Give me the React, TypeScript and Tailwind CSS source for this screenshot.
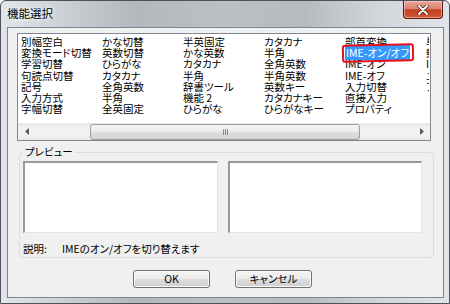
import React from 'react';

const columns: string[][] = [
  ['別幅空白', '変換モード切替', '学習切替', '句読点切替', '記号', '入力方式', '字幅切替'],
  ['かな切替', '英数切替', 'ひらがな', 'カタカナ', '全角英数', '半角', '全英固定'],
  ['半英固定', 'かな英数', 'カタカナ', '半角', '辞書ツール', '機能 2', 'ひらがな'],
  ['カタカナ', '半角', '全角英数', '半角英数', '英数キー', 'カタカナキー', 'ひらがなキー'],
  ['部首変換', 'IME-オン/オフ', 'IME-オン', 'IME-オフ', '入力切替', '直接入力', 'プロパティ'],
  ['単語登録', '郵便番号', 'IMEパッド', 'ユーザー辞書', 'ファンクション', '', ''],
];

const SELECTED = 'IME-オン/オフ';

function Arrow({ dir }: { dir: 'left' | 'right' }) {
  return (
    <svg width="4" height="7" viewBox="0 0 4 7">
      {dir === 'left' ? (
        <path d="M4 0L0 3.5L4 7Z" fill="#5a5a5a" />
      ) : (
        <path d="M0 0L4 3.5L0 7Z" fill="#5a5a5a" />
      )}
    </svg>
  );
}

function WinButton({ label }: { label: string }) {
  return (
    <button className="w-[77px] h-[18px] rounded-[3px] border border-[#707070] bg-[linear-gradient(180deg,#f4f4f4_0%,#ebebeb_48%,#dddddd_52%,#cfcfcf_100%)] text-[10.5px] leading-[16px] text-black shadow-[inset_0_0_0_1px_#fbfbfb]">
      {label}
    </button>
  );
}

export default function App() {
  return (
    <div className="w-[450px] h-[304px] bg-white overflow-hidden font-['Noto_Sans_CJK_JP',sans-serif] [font-feature-settings:'palt'] text-black">
      <div className="w-[450px] h-[304px] flex flex-col rounded-t-[6px] border border-[#4b5259] bg-[linear-gradient(90deg,#e2e6ea_0%,#cfd3d7_12%,#b4b8bc_30%,#bdc0c3_50%,#b8bbbe_68%,#d3d7db_85%,#e0e4e8_100%)]">
        {/* title bar */}
        <div className="h-[26px] flex items-start shrink-0">
          <div className="pl-[6px] pt-[5px] text-[11.5px] leading-[14px] [text-shadow:0_0_5px_#ffffff,0_0_3px_#ffffff]">
            機能選択
          </div>
          <button className="ml-auto mr-[6px] w-[40px] h-[18px] flex items-center justify-center rounded-b-[4px] border border-t-0 border-[#5a1a10] bg-[linear-gradient(180deg,#e8a797_0%,#d98370_45%,#c2401f_52%,#cf5a3a_100%)] shadow-[inset_0_0_0_1px_rgba(255,220,210,0.5)]">
            <svg width="12" height="10" viewBox="0 0 12 10">
              <path d="M2 1L10 9M10 1L2 9" stroke="#4a1a12" strokeWidth="3.4" strokeLinecap="round" />
              <path d="M2 1L10 9M10 1L2 9" stroke="#ffffff" strokeWidth="2" strokeLinecap="round" />
            </svg>
          </button>
        </div>

        {/* client area */}
        <div className="flex-1 ml-[6px] mr-[5px] mb-[5px] border border-[#7d858d] bg-[#f0f0f0] flex flex-col">
          {/* list view */}
          <div className="ml-[9px] mt-[5px] w-[414px] h-[108px] border border-[#828790] bg-white flex flex-col overflow-hidden">
            <div className="h-[89px] w-[412px] flex overflow-hidden pl-[3px] pt-[2px] text-[10.5px] leading-[11.2px]">
              {columns.map((col, ci) => (
                <div key={ci} className={`${ci === 5 ? 'w-[3px] overflow-hidden' : 'w-[81px]'} shrink-0 flex flex-col`}>
                  {col.map((item, ri) => (
                    <div key={ri} className="h-[11.2px] whitespace-nowrap">
                      {item === SELECTED ? (
                        <span className="relative inline-block">
                          <span className="bg-[#3399ff] text-white px-[1px]">{item}</span>
                          <span className="absolute -left-[3px] -right-[4px] -top-[3px] -bottom-[4px] border-2 border-[#e8101e] rounded-[3px] rotate-[-1.5deg]" />
                        </span>
                      ) : (
                        item
                      )}
                    </div>
                  ))}
                </div>
              ))}
            </div>
            {/* horizontal scrollbar */}
            <div className="h-[17px] flex bg-[linear-gradient(180deg,#e6e6e6_0%,#f2f2f2_30%,#f2f2f2_70%,#e8e8e8_100%)]">
              <div className="w-[17px] flex items-center justify-center">
                <Arrow dir="left" />
              </div>
              <div className="flex-1 flex items-center">
                <div className="ml-[55px] w-[270px] h-[16px] rounded-[3px] border border-[#9d9d9d] bg-[linear-gradient(180deg,#f6f6f6_0%,#ececec_45%,#dcdcdc_55%,#d4d4d4_100%)] flex items-center justify-center gap-[1px]">
                  <span className="w-[1px] h-[6px] bg-[#8a8a8a]" />
                  <span className="w-[1px] h-[6px] bg-[#8a8a8a]" />
                  <span className="w-[1px] h-[6px] bg-[#8a8a8a]" />
                </div>
              </div>
              <div className="w-[17px] flex items-center justify-center">
                <Arrow dir="right" />
              </div>
            </div>
          </div>

          {/* preview group */}
          <fieldset className="ml-[11px] mt-[5px] w-[414px] border border-[#d5dfe5] rounded-[3px] pl-[3px] pr-[11px] pt-[3px] pb-[2px]">
            <legend className="px-[2px] text-[10.5px] leading-[12px]">プレビュー</legend>
            <div className="flex gap-[10px]">
              <div className="w-[195px] h-[72px] bg-white border-t-2 border-l-2 border-b border-r border-t-[#9a9a9a] border-l-[#9a9a9a] border-b-[#e3e3e3] border-r-[#e3e3e3]" />
              <div className="w-[194px] h-[72px] bg-white border-t-2 border-l-2 border-b border-r border-t-[#9a9a9a] border-l-[#9a9a9a] border-b-[#e3e3e3] border-r-[#e3e3e3]" />
            </div>
            <div className="mt-[10px] flex text-[10.5px] leading-[12px]">
              <span className="w-[39px]">説明:</span>
              <span>IMEのオン/オフを切り替えます</span>
            </div>
          </fieldset>

          {/* buttons */}
          <div className="mt-[12px] pl-[125px] flex gap-[25px]">
            <WinButton label="OK" />
            <WinButton label="キャンセル" />
          </div>
        </div>
      </div>
    </div>
  );
}
